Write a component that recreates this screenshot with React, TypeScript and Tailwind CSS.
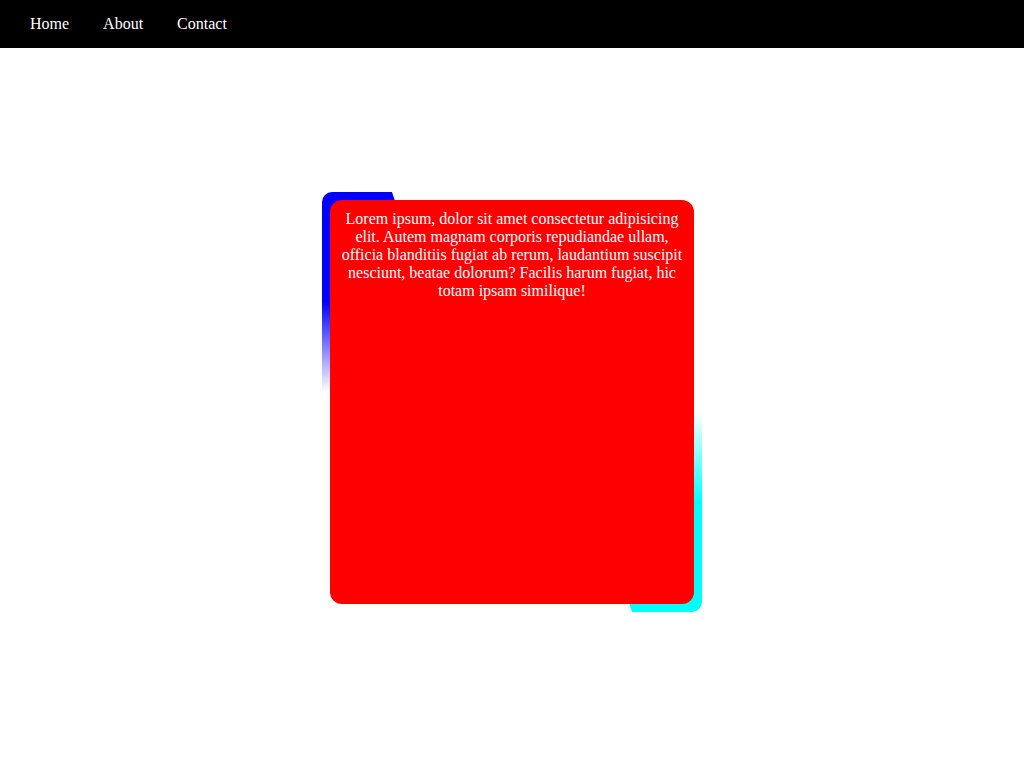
export default function App() {
  return (
    <div className="min-h-screen bg-white" style={{ fontFamily: '"Liberation Serif", "Times New Roman", serif' }}>
      <nav className="h-12 bg-black flex items-center pl-[30px] gap-[34px] text-white text-base">
        <a href="#" className="text-white">Home</a>
        <a href="#" className="text-white">About</a>
        <a href="#" className="text-white">Contact</a>
      </nav>
      <main className="flex justify-center pt-[144px]">
        <div className="relative w-[380px] h-[420px] rounded-[10px] overflow-hidden flex items-center justify-center">
          <div
            className="absolute left-0 top-0 w-[80px] h-[200px] bg-[linear-gradient(to_bottom,#0000ff_0%,#0000ff_55%,rgba(0,0,255,0)_100%)]"
            style={{ clipPath: 'polygon(0 0, 70px 0, 100% 30px, 100% 100%, 0 100%)' }}
          />
          <div
            className="absolute right-0 bottom-0 w-[80px] h-[200px] bg-[linear-gradient(to_top,#00ffff_0%,#00ffff_55%,rgba(0,255,255,0)_100%)]"
            style={{ clipPath: 'polygon(0 0, 100% 0, 100% 100%, 10px 100%, 0 calc(100% - 30px))' }}
          />
          <div className="relative w-[364px] h-[404px] bg-[#ff0000] rounded-xl px-[10px] pt-[10px] text-white text-base text-center leading-[18px]">
            Lorem ipsum, dolor sit amet consectetur adipisicing elit. Autem magnam corporis repudiandae ullam, officia blanditiis fugiat ab rerum, laudantium suscipit nesciunt, beatae dolorum? Facilis harum fugiat, hic totam ipsam similique!
          </div>
        </div>
      </main>
    </div>
  );
}
